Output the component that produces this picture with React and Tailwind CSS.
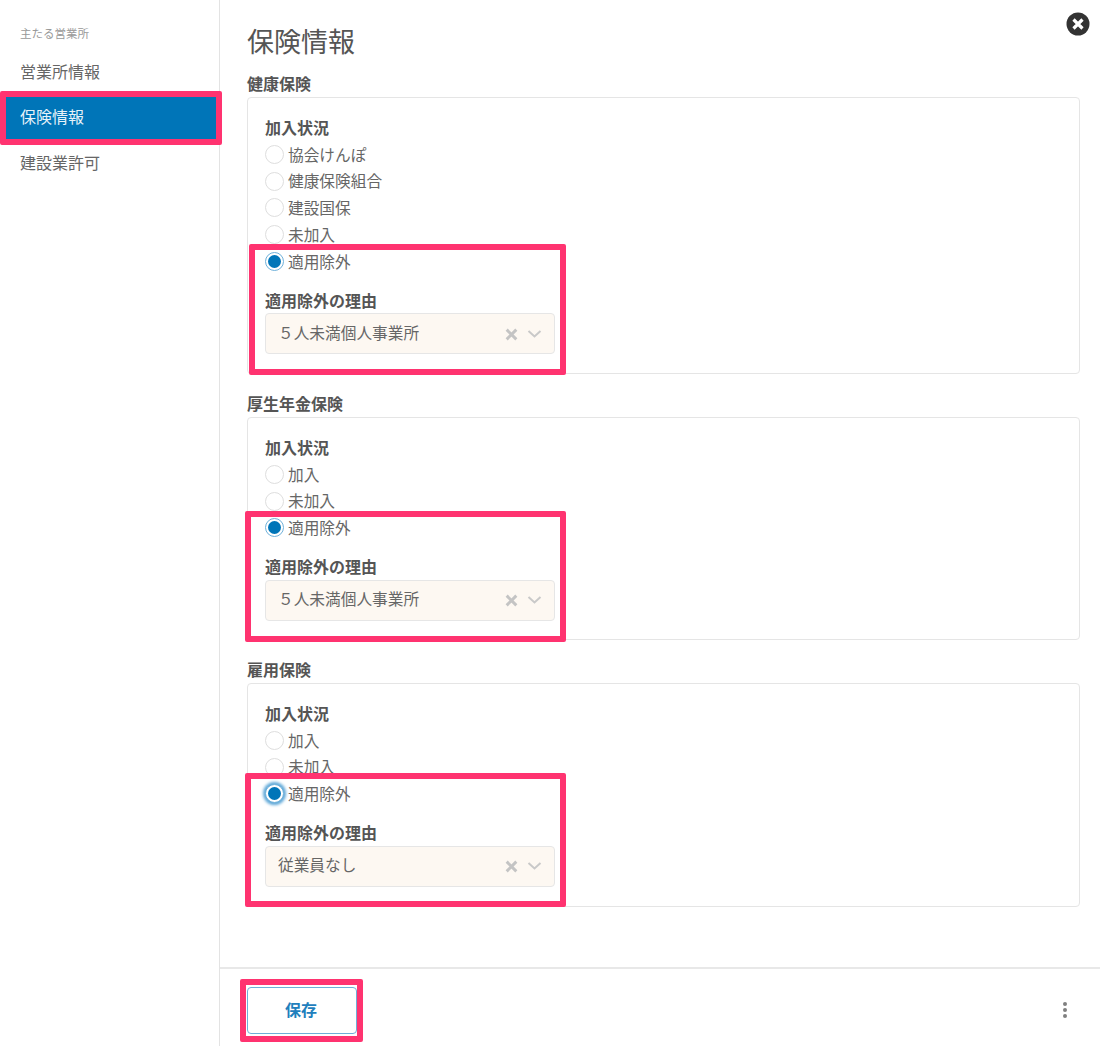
const font = { fontFamily: '"Noto Sans CJK JP","Noto Sans",sans-serif' };

function Radio({ label, checked, focused }) {
  return (
    <div className="flex h-[26.75px] items-center">
      {checked ? (
        <span className={`flex h-[19px] w-[19px] shrink-0 items-center justify-center rounded-full border border-[#6fb1da] bg-white ${focused ? "shadow-[0_0_3px_2px_#5fa8d8]" : ""}`}>
          <span className="h-[13px] w-[13px] rounded-full bg-[#0075b8]" />
        </span>
      ) : (
        <span className="h-[19px] w-[19px] shrink-0 rounded-full border border-[#dedede] bg-white" />
      )}
      <span className="ml-[4px] text-[15.7px] leading-none text-[#666]">{label}</span>
    </div>
  );
}

function Select({ value, pad }) {
  return (
    <div className={`flex h-[41px] w-[290px] items-center rounded-[4px] border border-[#e6e6e6] bg-[#fdf8f2] pr-[12px] ${pad}`}>
      <span className="flex-1 pb-[2px] text-[15.7px] leading-none text-[#666]">{value}</span>
      <svg width="15" height="15" viewBox="0 0 14 14" className="mr-[8px] mt-[1px]">
        <path d="M2.5 2.5l9 9M11.5 2.5l-9 9" stroke="#c4c4c4" strokeWidth="2.8" fill="none" />
      </svg>
      <svg width="15" height="10" viewBox="0 0 15 10">
        <path d="M1.5 2l6 5.5 6-5.5" stroke="#c9c9c9" strokeWidth="2" fill="none" />
      </svg>
    </div>
  );
}

function Section({ title, options, value, pad, focused, cardH, className }) {
  return (
    <section className={className}>
      <h3 className="flex h-[24px] items-center pt-[1px] text-[16px] font-bold leading-none text-[#555]">{title}</h3>
      <div className="mt-[3px] rounded-[4px] border border-[#e5e5e5] px-[17px] pt-[17px]" style={{ height: cardH }}>
        <div className="mb-[3px] flex h-[23px] items-center text-[16px] font-bold leading-none text-[#555]">加入状況</div>
        {options.map((o) => (
          <Radio key={o} label={o} />
        ))}
        <Radio label="適用除外" checked focused={focused} />
        <div className="mt-[14px] flex h-[22px] items-center text-[16px] font-bold leading-none text-[#555]">適用除外の理由</div>
        <div className="mt-[2.5px]">
          <Select value={value} pad={pad} />
        </div>
      </div>
    </section>
  );
}

function Mark({ className }) {
  return <div className={`pointer-events-none absolute rounded-[2px] border-[6px] border-[#ff3370] ${className}`} />;
}

export default function App() {
  return (
    <div className="relative flex h-[1046px] w-[1100px] overflow-hidden bg-white" style={font}>
      <aside className="w-[220px] shrink-0 border-r border-[#e3e3e3]">
        <div className="flex h-[50px] items-start pt-[28px] pl-[20px] text-[11.5px] leading-none text-[#999]">主たる営業所</div>
        <div className="flex h-[44px] items-center pb-[2px] pl-[20px] text-[16px] leading-none text-[#666]">営業所情報</div>
        <div className="flex h-[46px] items-center bg-[#0075b8] pb-[2px] pl-[20px] text-[16px] leading-none text-[#e6f2f9]">保険情報</div>
        <div className="flex h-[46px] items-center pb-[2px] pl-[20px] text-[16px] leading-none text-[#666]">建設業許可</div>
      </aside>
      <main className="flex min-w-0 flex-1 flex-col">
        <div className="relative h-[967px] px-[27px] pr-[20px]">
          <h2 className="flex h-[70px] items-center pt-[11px] text-[27px] font-normal leading-none text-[#555]">保険情報</h2>
          <Section title="健康保険" options={["協会けんぽ", "健康保険組合", "建設国保", "未加入"]} value="５人未満個人事業所" pad="pl-[12px]" cardH={277} />
          <Section className="mt-[16px]" title="厚生年金保険" options={["加入", "未加入"]} value="５人未満個人事業所" pad="pl-[12px]" cardH={223} />
          <Section className="mt-[16px]" title="雇用保険" options={["加入", "未加入"]} value="従業員なし" pad="pl-[12px]" focused cardH={224} />
        </div>
        <footer className="flex h-[79px] items-center justify-between border-t-2 border-[#e8e8e8] pt-[6px] pl-[27px] pr-[33px]">
          <button className="h-[47px] w-[110px] rounded-[4px] border border-[#6eaed8] bg-white pb-[3px] pr-[2px] text-[16px] font-bold text-[#1f80bd]">保存</button>
          <div className="mb-[2px] flex flex-col gap-[2px]">
            <span className="h-[4px] w-[4px] rounded-full bg-[#808080]" />
            <span className="h-[4px] w-[4px] rounded-full bg-[#808080]" />
            <span className="h-[4px] w-[4px] rounded-full bg-[#808080]" />
          </div>
        </footer>
      </main>

      <button className="absolute left-[1066px] top-[12px] h-[24px] w-[24px]">
        <svg width="24" height="24" viewBox="0 0 24 24">
          <circle cx="12" cy="12" r="11.5" fill="#333" />
          <path d="M7.5 7.5l9 9M16.5 7.5l-9 9" stroke="#fff" strokeWidth="3.2" fill="none" />
        </svg>
      </button>

      <Mark className="left-0 top-[91px] h-[54px] w-[222px]" />
      <Mark className="left-[249px] top-[244px] h-[131px] w-[317px]" />
      <Mark className="left-[245px] top-[511px] h-[131px] w-[321px]" />
      <Mark className="left-[245px] top-[773px] h-[134px] w-[321px]" />
      <Mark className="left-[240px] top-[979px] h-[63px] w-[123px]" />
    </div>
  );
}
